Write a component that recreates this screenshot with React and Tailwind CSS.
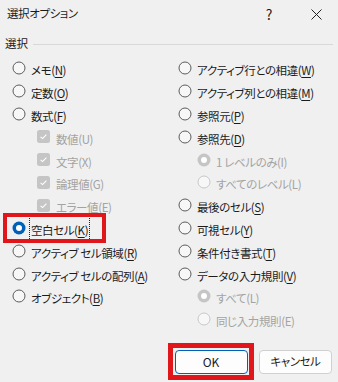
import React from "react";

const font = {
  fontFamily: '"Noto Sans CJK JP", "Noto Sans", sans-serif',
};

const RadioIcon = ({ checked, disabled }) => {
  if (checked) {
    return (
      <svg width="14" height="14" viewBox="0 0 14 14" className="shrink-0">
        <circle cx="7" cy="7" r="6.5" fill={disabled ? "#c5c5c5" : "#005fb8"} />
        <circle cx="7" cy="7" r="3" fill="#ffffff" />
      </svg>
    );
  }
  return (
    <svg width="14" height="14" viewBox="0 0 14 14" className="shrink-0">
      <circle
        cx="7"
        cy="7"
        r="6"
        fill="#f7f7f7"
        stroke={disabled ? "#c8c8c8" : "#5c5c5c"}
        strokeWidth="1"
      />
    </svg>
  );
};

const CheckIcon = () => (
  <svg width="13" height="13" viewBox="0 0 13 13" className="shrink-0">
    <rect x="0" y="0" width="13" height="13" rx="2.5" fill="#c5c5c5" />
    <path
      d="M3.6 6.8 L5.6 8.6 L9.4 4.6"
      fill="none"
      stroke="#ffffff"
      strokeWidth="1.1"
    />
  </svg>
);

const Label = ({ parts, disabled }) => {
  const [before, key, after] = parts;
  return (
    <span
      className={`text-[11.5px] tracking-[-0.4px] leading-none whitespace-nowrap ${
        disabled ? "text-[#a3a3a3]" : "text-[#1b1b1b]"
      }`}
    >
      {before}
      {disabled ? key : <span className="underline underline-offset-2">{key}</span>}
      {after}
    </span>
  );
};

const Row = ({ parts, type = "radio", checked, disabled, indent, focus }) => (
  <div
    className={`h-[22.8px] flex items-center gap-[5px] ${
      indent ? "pl-[19px]" : ""
    }`}
  >
    {type === "check" ? (
      <span className="pl-[6px] flex items-center">
        <CheckIcon />
      </span>
    ) : (
      <RadioIcon checked={checked} disabled={disabled} />
    )}
    {focus ? (
      <span className="border border-dotted border-[#222] px-[1px] py-[2px] -ml-[2px]">
        <Label parts={parts} disabled={disabled} />
      </span>
    ) : (
      <span className={type === "check" ? "pl-[1px]" : ""}>
        <Label parts={parts} disabled={disabled} />
      </span>
    )}
  </div>
);

const left = [
  { parts: ["メモ(", "N", ")"] },
  { parts: ["定数(", "O", ")"] },
  { parts: ["数式(", "F", ")"] },
  { parts: ["数値(", "U", ")"], type: "check", disabled: true, indent: true },
  { parts: ["文字(", "X", ")"], type: "check", disabled: true, indent: true },
  { parts: ["論理値(", "G", ")"], type: "check", disabled: true, indent: true },
  { parts: ["エラー値(", "E", ")"], type: "check", disabled: true, indent: true },
  { parts: ["空白セル(", "K", ")"], checked: true, focus: true, red: true },
  { parts: ["アクティブ セル領域(", "R", ")"] },
  { parts: ["アクティブ セルの配列(", "A", ")"] },
  { parts: ["オブジェクト(", "B", ")"] },
];

const right = [
  { parts: ["アクティブ行との相違(", "W", ")"] },
  { parts: ["アクティブ列との相違(", "M", ")"] },
  { parts: ["参照元(", "P", ")"] },
  { parts: ["参照先(", "D", ")"] },
  { parts: ["1 レベルのみ(", "I", ")"], checked: true, disabled: true, indent: true },
  { parts: ["すべてのレベル(", "L", ")"], disabled: true, indent: true },
  { parts: ["最後のセル(", "S", ")"] },
  { parts: ["可視セル(", "Y", ")"] },
  { parts: ["条件付き書式(", "T", ")"] },
  { parts: ["データの入力規則(", "V", ")"] },
  { parts: ["すべて(", "L", ")"], checked: true, disabled: true, indent: true },
  { parts: ["同じ入力規則(", "E", ")"], disabled: true, indent: true },
];

export default function App() {
  return (
    <div
      style={font}
      className="w-[338px] h-[382px] bg-[#f0f0f0] overflow-hidden relative [font-feature-settings:'palt'] text-[#1b1b1b]"
    >
      {/* タイトルバー */}
      <div className="h-[28px] flex items-center pl-[7px]">
        <span className="text-[11.5px] tracking-[-0.4px] leading-none flex-1">選択オプション</span>
        <span className="text-[14px] leading-none w-[46px] text-center">?</span>
        <span className="w-[46px] flex justify-center pl-[2px]">
          <svg width="11" height="11" viewBox="0 0 11 11">
            <path d="M0.5 0.5 L10.5 10.5 M10.5 0.5 L0.5 10.5" stroke="#222" strokeWidth="1" />
          </svg>
        </span>
      </div>

      {/* 選択 */}
      <div className="mt-[8px] pl-[5px] pr-[5px] flex items-center gap-[5px] h-[16px]">
        <span className="text-[11.5px] leading-none">選択</span>
        <div className="flex-1 h-px bg-[#d8d8d8]" />
      </div>

      {/* オプション */}
      <div className="mt-[5px] grid grid-cols-[165px_1fr] pl-[12px]">
        <div className="flex flex-col">
          {left.map((r, i) =>
            r.red ? (
              <div
                key={i}
                className="relative -ml-[9px] pl-[9px] -my-[4px] py-[4px] w-[103px] outline-[4px] outline-[#e0161b] -outline-offset-[4px]"
              >
                <Row {...r} />
              </div>
            ) : (
              <Row key={i} {...r} />
            )
          )}
        </div>
        <div className="flex flex-col pl-[1px]">
          {right.map((r, i) => (
            <Row key={i} {...r} />
          ))}
        </div>
      </div>

      {/* ボタン */}
      <div className="absolute left-[168px] top-[343px] flex items-center gap-[5px]">
        <div className="w-[86px] h-[37px] border-[5px] border-[#e0161b] flex items-center justify-center">
          <button className="w-[73px] h-[24px] bg-[#fdfdfd] border border-[#005fb8] rounded-[4px] text-[12px] leading-none">
            OK
          </button>
        </div>
        <button className="w-[73px] h-[24px] bg-[#fdfdfd] border border-[#d0d0d0] rounded-[4px] text-[11.5px] tracking-[-0.4px] leading-none">
          キャンセル
        </button>
      </div>
    </div>
  );
}
